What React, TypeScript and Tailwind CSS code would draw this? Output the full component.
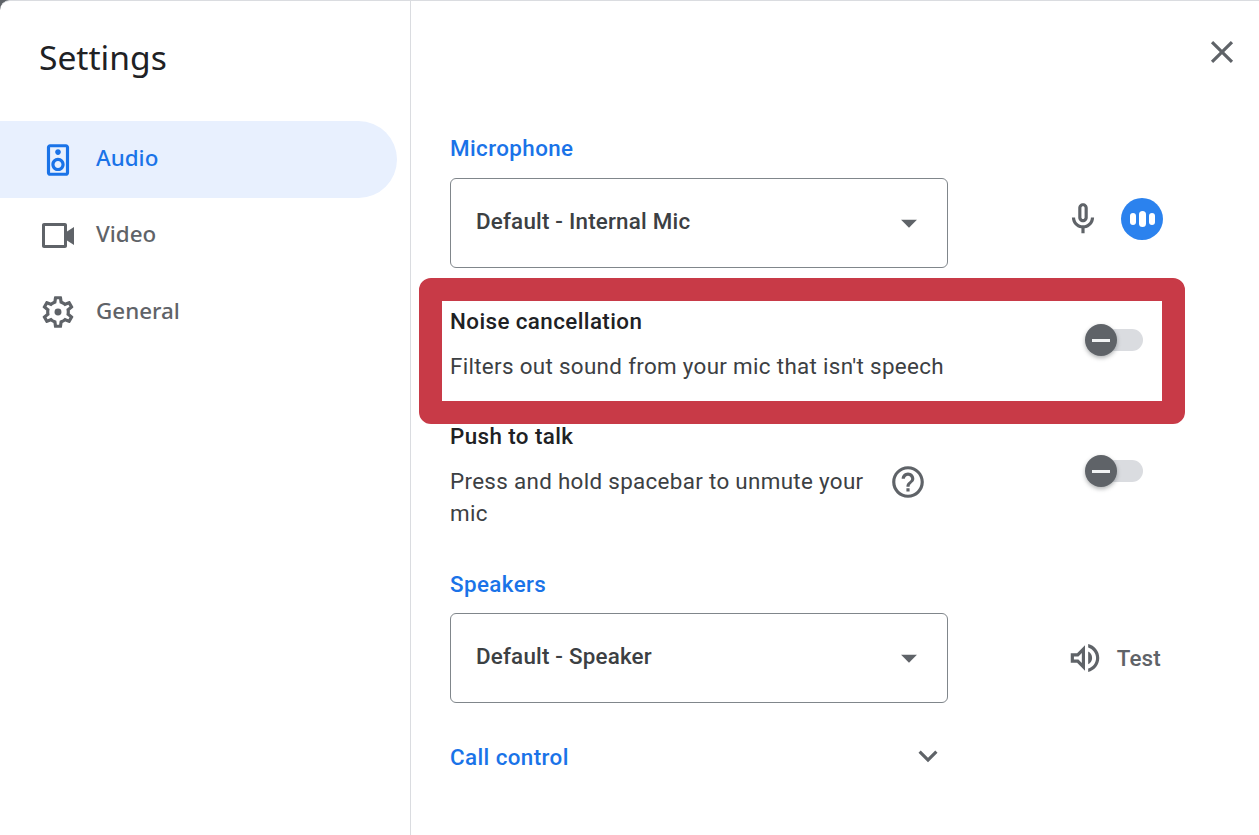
const F = "font-['Roboto','Liberation_Sans',sans-serif]";

function Icon({ d, className, children }: { d?: string; className: string; children?: React.ReactNode }) {
  return (
    <svg viewBox="0 0 24 24" className={className} fill="currentColor">
      {d && <path d={d} />}
      {children}
    </svg>
  );
}

const icons = {
  speaker: "M17 2H7c-1.100 0-2 .9-2 2v16c0 1.100.9 1.990 2 1.990L17 22c1.100 0 2-.9 2-2V4c0-1.100-.9-2-2-2zM7 20V4h10v16H7zm5-11.200c1 0 1.800-.8 1.800-1.800S13 5.200 12 5.200s-1.800.8-1.800 1.800.8 1.800 1.800 1.800zm0 1.800c-2.320 0-4.200 1.880-4.200 4.200S9.680 19 12 19s4.200-1.880 4.200-4.200-1.880-4.200-4.200-4.200zm0 6.400c-1.210 0-2.200-.99-2.200-2.200s.99-2.200 2.200-2.200 2.200.99 2.200 2.200-.99 2.200-2.200 2.200z",
  gear: "M19.43 12.98c.04-.32.07-.64.07-.98 0-.34-.03-.66-.07-.98l2.11-1.65c.19-.15.24-.42.12-.64l-2-3.46c-.09-.16-.26-.25-.44-.25-.06 0-.12.01-.17.03l-2.49 1c-.52-.4-1.08-.73-1.69-.98l-.38-2.65C14.46 2.18 14.25 2 14 2h-4c-.25 0-.46.18-.49.42l-.38 2.65c-.61.25-1.17.59-1.69.98l-2.49-1c-.06-.02-.12-.03-.18-.03-.17 0-.34.09-.43.25l-2 3.46c-.13.22-.07.49.12.64l2.11 1.65c-.04.32-.07.65-.07.98 0 .33.03.66.07.98l-2.11 1.65c-.19.15-.24.42-.12.64l2 3.46c.09.16.26.25.44.25.06 0 .12-.01.17-.03l2.49-1c.52.4 1.08.73 1.69.98l.38 2.65c.03.24.24.42.49.42h4c.25 0 .46-.18.49-.42l.38-2.65c.61-.25 1.17-.59 1.69-.98l2.49 1c.06.02.12.03.18.03.17 0 .34-.09.43-.25l2-3.46c.12-.22.07-.49-.12-.64l-2.11-1.65zm-1.98-1.71c.04.31.05.52.05.73 0 .21-.02.43-.05.73l-.14 1.13.89.7 1.08.84-.7 1.21-1.27-.51-1.04-.42-.9.68c-.43.32-.84.56-1.25.73l-1.06.43-.16 1.13-.2 1.35h-1.4l-.19-1.35-.16-1.13-1.06-.43c-.43-.18-.83-.41-1.23-.71l-.91-.7-1.06.43-1.27.51-.7-1.21 1.08-.84.89-.7-.14-1.13c-.03-.31-.05-.54-.05-.74s.02-.43.05-.73l.14-1.13-.89-.7-1.08-.84.7-1.21 1.27.51 1.04.42.9-.68c.43-.32.84-.56 1.25-.73l1.06-.43.16-1.13.2-1.35h1.39l.19 1.35.16 1.13 1.06.43c.43.18.83.41 1.23.71l.91.7 1.06-.43 1.27-.51.7 1.21-1.07.85-.89.7.14 1.13z",
  mic: "M12 14c1.66 0 3-1.34 3-3V5c0-1.66-1.34-3-3-3S9 3.34 9 5v6c0 1.66 1.34 3 3 3zm-1-9c0-.55.45-1 1-1s1 .45 1 1v6c0 .55-.45 1-1 1s-1-.45-1-1V5zm6 6c0 2.76-2.24 5-5 5s-5-2.24-5-5H5c0 3.53 2.61 6.43 6 6.92V21h2v-3.08c3.39-.49 6-3.39 6-6.92h-2z",
  help: "M11 18h2v-2h-2v2zm1-16C6.48 2 2 6.48 2 12s4.48 10 10 10 10-4.48 10-10S17.52 2 12 2zm0 18c-4.41 0-8-3.59-8-8s3.59-8 8-8 8 3.59 8 8-3.59 8-8 8zm0-14c-2.21 0-4 1.79-4 4h2c0-1.1.9-2 2-2s2 .9 2 2c0 2-3 1.75-3 5h2c0-2.25 3-2.5 3-5 0-2.21-1.79-4-4-4z",
  volume: "M3 9v6h4l5 5V4L7 9H3zm7-.17v6.34L7.83 13H5v-2h2.83L10 8.83zM16.5 12c0-1.77-1.02-3.29-2.5-4.03v8.05c1.48-.73 2.5-2.25 2.5-4.02zM14 3.23v2.06c2.89.86 5 3.54 5 6.71s-2.11 5.85-5 6.71v2.06c4.01-.91 7-4.490 7-8.770 0-4.280-2.990-7.860-7-8.770z",
  close: "M19 6.41L17.59 5 12 10.59 6.41 5 5 6.41 10.59 12 5 17.59 6.41 19 12 13.41 17.59 19 19 17.59 13.41 12z",
  chevron: "M16.59 8.59L12 13.17 7.41 8.59 6 10l6 6 6-6z",
  caret: "M7 10l5 5 5-5z",
};

function VideoIcon() {
  return (
    <svg viewBox="0 0 38 38" className="h-[38px] w-[38px] text-[#5f6368]" fill="currentColor">
      <path fillRule="evenodd" d="M5 7h21c1.100 0 2 .9 2 2v6.500l7-4.500v18l-7-4.500V30c0 1.100-.9 2-2 2H5c-1.100 0-2-.9-2-2V9c0-1.100.9-2 2-2zm1 3v19h19V10H6z" />
    </svg>
  );
}

function NavItem({ label, active, icon }: { label: string; active?: boolean; icon: React.ReactNode }) {
  return (
    <div className={`flex h-[77px] w-[397px] items-center gap-[19px] rounded-r-full pl-[39px] ${active ? "bg-[#e8f0fe] text-[#1a73e8]" : "pb-[3px] text-[#5f6368]"}`}>
      {icon}
      <span className="pb-[3px] font-['Noto_Sans',sans-serif] text-[22.4px] leading-8 font-medium">{label}</span>
    </div>
  );
}

function Select({ value }: { value: string }) {
  return (
    <div className="flex h-[90px] w-[498px] items-center justify-between rounded-md border border-[#80868b] pr-[19px] pl-[25px]">
      <span className="pb-[4px] text-[22.4px] leading-8 font-medium tracking-[0.2px] text-[#3c4043]">{value}</span>
      <Icon d={icons.caret} className="h-[38px] w-[38px] text-[#5f6368]" />
    </div>
  );
}

function Heading({ className, children }: { className: string; children: React.ReactNode }) {
  return <div className={`text-[22.4px] leading-8 font-medium tracking-[0.4px] text-[#1a73e8] ${className}`}>{children}</div>;
}

function Toggle({ className }: { className: string }) {
  return (
    <div className={`relative mr-5 flex h-8 w-[58px] shrink-0 items-center justify-end ${className}`}>
      <div className="h-[22px] w-[46px] rounded-full bg-[#dadce0]" />
      <div className="absolute top-0 left-0 flex h-8 w-8 items-center justify-center rounded-full bg-[#5f6368] shadow-[0_2px_4px_rgba(60,64,67,0.4)]">
        <div className="h-[3px] w-[18px] bg-[#f1f3f4]" />
      </div>
    </div>
  );
}

export default function App() {
  return (
    <div className={`relative h-[835px] w-[1259px] overflow-hidden bg-[#5f6368] ${F}`}>
      <div className="flex h-[835px] rounded-tl-[10px] border-t border-t-[#dadce0] bg-white">
        <aside className="w-[411px] shrink-0 border-r border-r-[#dadce0]">
          <div className="flex h-[120px] flex-col pt-[35px] pl-[39px]">
            <h1 className="font-['Noto_Sans',sans-serif] text-[33.6px] leading-[42px] text-[#202124]">Settings</h1>
          </div>
          <NavItem label="Audio" active icon={<Icon d={icons.speaker} className="h-[38px] w-[38px]" />} />
          <NavItem label="Video" icon={<VideoIcon />} />
          <NavItem
            label="General"
            icon={
              <Icon d={icons.gear} className="h-[38px] w-[38px]">
                <circle cx="12" cy="12" r="2.200" />
              </Icon>
            }
          />
        </aside>
        <main className="flex-1">
          <div className="flex justify-end pt-[32px] pr-[18px]">
            <Icon d={icons.close} className="h-[38px] w-[38px] text-[#5f6368]" />
          </div>
          <div className="mt-[61px] ml-[39px] w-[713px]">
            <Heading className="">Microphone</Heading>
            <div className="mt-[14px] flex items-center justify-between">
              <Select value="Default - Internal Mic" />
              <div className="flex items-center gap-[19px] pb-2">
                <Icon d={icons.mic} className="h-[38px] w-[38px] text-[#5f6368]" />
                <div className="flex h-[42px] w-[42px] items-center justify-center gap-[3px] rounded-full bg-[#2b82ee]">
                  <div className="h-[12px] w-[6px] rounded-full bg-white" />
                  <div className="h-[16px] w-[7px] rounded-full bg-white" />
                  <div className="h-[12px] w-[6px] rounded-full bg-white" />
                </div>
              </div>
            </div>

            <div className="mt-[37px] flex items-start justify-between">
              <div>
                <div className="text-[22.4px] leading-8 font-medium tracking-[0.4px] text-[#202124]">Noise cancellation</div>
                <div className="mt-[13px] text-[22.4px] leading-8 tracking-[0.32px] text-[#3c4043]">Filters out sound from your mic that isn't speech</div>
              </div>
              <Toggle className="mt-[19px]" />
            </div>

            <div className="mt-[38px] flex items-start justify-between">
              <div>
                <div className="text-[22.4px] leading-8 font-medium tracking-[0.4px] text-[#202124]">Push to talk</div>
                <div className="mt-[13px] flex items-start">
                  <div className="w-[430px] text-[22.4px] leading-8 tracking-[0.32px] text-[#3c4043]">Press and hold spacebar to unmute your mic</div>
                  <Icon d={icons.help} className="-mt-[2px] ml-[9px] h-[38px] w-[38px] text-[#5f6368]" />
                </div>
              </div>
              <Toggle className="mt-[35px]" />
            </div>

            <Heading className="mt-[39px]">Speakers</Heading>
            <div className="mt-[13px] flex items-center justify-between">
              <Select value="Default - Speaker" />
              <div className="flex items-center gap-[13px] pr-[2px]">
                <Icon d={icons.volume} className="h-[38px] w-[38px] text-[#5f6368]" />
                <span className="text-[22.4px] leading-8 font-medium tracking-[0.2px] text-[#5f6368]">Test</span>
              </div>
            </div>

            <div className="mt-[36px] flex w-[498px] items-center justify-between">
              <Heading className="">Call control</Heading>
              <Icon d={icons.chevron} className="mt-[-2px] mr-[1px] h-[38px] w-[38px] text-[#5f6368]" />
            </div>
          </div>
        </main>
      </div>
      <div className="absolute top-[278px] left-[419px] h-[146px] w-[766px] rounded-xl border-[23px] border-[#c83a47]" />
    </div>
  );
}
